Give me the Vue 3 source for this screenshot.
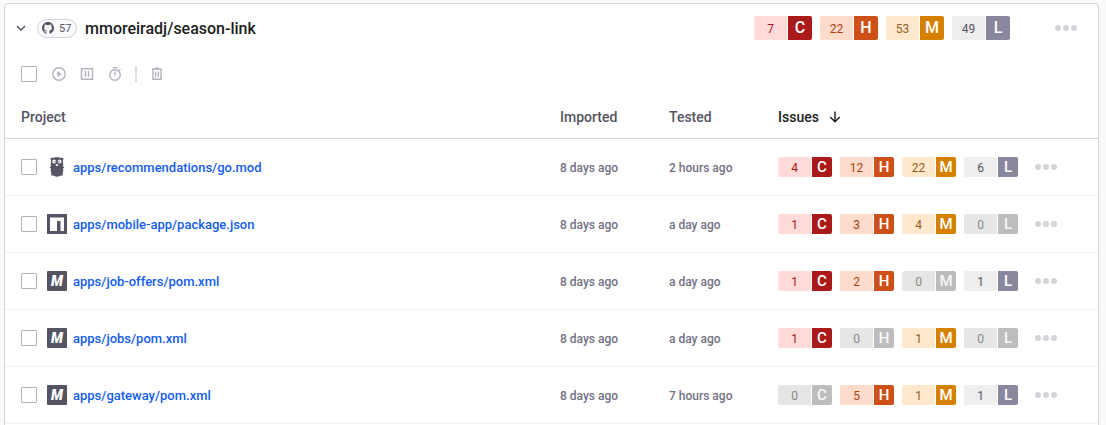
<script setup>
const levels = ['C', 'H', 'M', 'L']
const names = { C: 'critical', H: 'high', M: 'medium', L: 'low' }
const totals = [7, 22, 53, 49]
const projects = [
  { name: 'apps/recommendations/go.mod', icon: 'go', imported: '8 days ago', tested: '2 hours ago', issues: [4, 12, 22, 6] },
  { name: 'apps/mobile-app/package.json', icon: 'npm', imported: '8 days ago', tested: 'a day ago', issues: [1, 3, 4, 0] },
  { name: 'apps/job-offers/pom.xml', icon: 'maven', imported: '8 days ago', tested: 'a day ago', issues: [1, 2, 0, 1] },
  { name: 'apps/jobs/pom.xml', icon: 'maven', imported: '8 days ago', tested: 'a day ago', issues: [1, 0, 1, 0] },
  { name: 'apps/gateway/pom.xml', icon: 'maven', imported: '8 days ago', tested: '7 hours ago', issues: [0, 5, 1, 1] },
]
</script>

<template>
  <main class="page">
    <section class="card">
      <header class="head">
        <button class="icon-btn chevron" type="button" aria-label="Collapse">
          <svg width="10" height="6" viewBox="0 0 10 6"><path d="M1 1l4 4 4-4" fill="none" stroke="#555463" stroke-width="1.5" /></svg>
        </button>
        <span class="pill">
          <svg width="12" height="12" viewBox="0 0 16 16"><path fill="#555463" d="M8 0C3.58 0 0 3.58 0 8c0 3.54 2.29 6.53 5.47 7.59.4.07.55-.17.55-.38 0-.19-.01-.82-.01-1.49-2.01.37-2.53-.49-2.69-.94-.09-.23-.48-.94-.82-1.13-.28-.15-.68-.52-.01-.53.63-.01 1.08.58 1.23.82.72 1.21 1.87.87 2.33.66.07-.52.28-.87.51-1.07-1.78-.2-3.64-.89-3.64-3.95 0-.87.31-1.59.82-2.15-.08-.2-.36-1.02.08-2.12 0 0 .67-.21 2.2.82a7.6 7.6 0 0 1 4 0c1.53-1.04 2.2-.82 2.2-.82.44 1.1.16 1.92.08 2.12.51.56.82 1.27.82 2.15 0 3.07-1.87 3.75-3.65 3.95.29.25.54.73.54 1.48 0 1.07-.01 1.93-.01 2.2 0 .21.15.46.55.38A8.01 8.01 0 0 0 16 8c0-4.42-3.58-8-8-8z" /></svg>
          57
        </span>
        <h2 class="title">mmoreiradj/season-link</h2>
        <div class="issues large">
          <span v-for="(level, i) in levels" :key="level" class="chip" :class="names[level]">
            <span class="count">{{ totals[i] }}</span><span class="level">{{ level }}</span>
          </span>
        </div>
        <button class="icon-btn more" type="button" aria-label="More actions">
          <svg width="22" height="6" viewBox="0 0 22 6" fill="#d3d3d9"><circle cx="3" cy="3" r="3" /><circle cx="11" cy="3" r="3" /><circle cx="19" cy="3" r="3" /></svg>
        </button>
      </header>

      <div class="tools">
        <input type="checkbox" class="check" aria-label="Select all projects">
        <button class="icon-btn tool" type="button" aria-label="Activate">
          <svg width="14" height="14" viewBox="0 0 14 14"><circle cx="7" cy="7" r="6.2" fill="none" stroke="#b3b2bd" stroke-width="1.4" /><path d="M5.4 4v6l4.2-3z" fill="#b3b2bd" /></svg>
        </button>
        <button class="icon-btn tool" type="button" aria-label="Deactivate">
          <svg width="14" height="14" viewBox="0 0 14 14" fill="none" stroke="#b3b2bd" stroke-width="1.4"><path d="M1.500 1.700h11v10.600h-11zM5.500 4v6M8.500 4v6" /></svg>
        </button>
        <button class="icon-btn tool" type="button" aria-label="Test frequency">
          <svg width="14" height="14" viewBox="0 0 14 14" fill="none" stroke="#b3b2bd" stroke-width="1.4"><circle cx="7" cy="8" r="5.3" /><path d="M5 .7h4M7 4.500v4M11 3.600l1.400-1.400" /></svg>
        </button>
        <span class="divider"></span>
        <button class="icon-btn tool" type="button" aria-label="Delete">
          <svg width="14" height="14" viewBox="0 0 14 14" fill="none" stroke="#b3b2bd" stroke-width="1.4"><path d="M2 2.200h10M5 1.200h4M2.900 2.500v9.800h8.200V2.500M5.600 4.500v6M8.400 4.500v6" /></svg>
        </button>
      </div>

      <table class="table">
        <colgroup><col><col class="col-date"><col class="col-date"><col class="col-issues"></colgroup>
        <thead>
          <tr>
            <th>Project</th>
            <th>Imported</th>
            <th>Tested</th>
            <th aria-sort="descending">
              <button class="sort" type="button">
                Issues
                <svg width="12" height="12" viewBox="0 0 12 12"><path d="M6 .5v10M1.200 6L6 10.800 10.800 6" fill="none" stroke="#1c1c21" stroke-width="1.4" /></svg>
              </button>
            </th>
          </tr>
        </thead>
        <tbody>
          <tr v-for="project in projects" :key="project.name">
            <td>
              <div class="project">
                <input type="checkbox" class="check" :aria-label="project.name">
                <svg v-if="project.icon === 'go'" class="logo" width="20" height="20" viewBox="0 0 20 20">
                  <path fill="#555463" d="M5.500 1C7.500-.1 12.500-.1 14.500 1c1-.5 2 .1 1.900 1.100 0 .7-.5.9-.5 1.500.3 2 .3 4 .3 6.200.6.1 1 .5.8.900-.1.300-.5.300-.8.200 0 2.200.2 4.300-.6 6.100.3.700.3 1.500-.2 1.700-.4.200-.9-.1-1.200-.4-2.400 1.800-6 1.800-8.400 0-.3.300-.8.600-1.200.400-.5-.2-.5-1-.2-1.700-.8-1.800-.6-3.900-.6-6.100-.3.100-.7.100-.8-.200-.2-.4.200-.8.800-.900 0-2.200 0-4.200.3-6.200 0-.6-.5-.8-.5-1.500C3.500 1.100 4.500.5 5.500 1z" />
                  <g fill="#fff"><circle cx="7.200" cy="4.500" r="1.900" /><circle cx="12.600" cy="4.500" r="1.900" /><path d="M8.500 7.200h2.800l-.6 1.800H9.100z" /></g>
                  <g fill="#555463"><circle cx="7.900" cy="4.700" r=".8" /><circle cx="12" cy="4.700" r=".8" /></g>
                </svg>
                <svg v-else-if="project.icon === 'npm'" class="logo" width="20" height="20" viewBox="0 0 20 20">
                  <path fill="#555463" d="M0 0h20v20H0z" /><path fill="#fff" d="M3 3.500h14V17h-3.500V7H10v10H3z" />
                </svg>
                <svg v-else class="logo" width="20" height="20" viewBox="0 0 20 20">
                  <rect width="20" height="20" rx="1" fill="#555463" />
                  <text class="mark" x="10" y="15" text-anchor="middle" fill="#fff">M</text>
                </svg>
                <a class="link" href="#">{{ project.name }}</a>
              </div>
            </td>
            <td class="date">{{ project.imported }}</td>
            <td class="date">{{ project.tested }}</td>
            <td>
              <div class="row-end">
                <div class="issues">
                  <span v-for="(level, i) in levels" :key="level" class="chip" :class="project.issues[i] ? names[level] : 'none'">
                    <span class="count">{{ project.issues[i] }}</span><span class="level">{{ level }}</span>
                  </span>
                </div>
                <button class="icon-btn" type="button" aria-label="More actions">
                  <svg width="22" height="6" viewBox="0 0 22 6" fill="#d3d3d9"><circle cx="3" cy="3" r="3" /><circle cx="11" cy="3" r="3" /><circle cx="19" cy="3" r="3" /></svg>
                </button>
              </div>
            </td>
          </tr>
        </tbody>
      </table>
    </section>
  </main>
</template>

<style>
html { background: #f9f8fb; overflow: hidden; }
</style>

<style scoped>
* { box-sizing: border-box; }
.page {
  padding: 3px 7px 0 4px;
  font-family: Roboto, "Liberation Sans", sans-serif;
  color: #555463;
}
.card {
  background: #fff;
  border: 1px solid #d3d3d9;
  border-radius: 4px;
  padding-bottom: 16px;
}
svg { display: block; flex: none; }
button {
  border: 0;
  padding: 0;
  background: none;
  font: inherit;
  color: inherit;
  cursor: pointer;
}
.icon-btn { display: flex; align-items: center; justify-content: center; }
.head {
  display: flex;
  align-items: center;
  height: 48px;
  padding: 0 21px 0 11px;
}
.chevron { width: 10px; }
.pill {
  display: flex;
  align-items: center;
  gap: 5px;
  width: 40px;
  height: 19px;
  margin: 0 8px 0 11px;
  padding-left: 4px;
  border: 1px solid #d3d3d9;
  border-radius: 10px;
  background: #f9f8fb;
  font-size: 11px;
}
.title {
  margin: 0;
  font-size: 16px;
  font-weight: 500;
  color: #1c1c21;
}
.head .issues { margin-left: auto; }
.more { margin-left: 45px; }
.tools {
  display: flex;
  align-items: center;
  gap: 14px;
  height: 44px;
  padding: 0 16px;
}
.tools .check { margin-right: 1px; }
.check {
  appearance: none;
  flex: none;
  width: 16px;
  height: 16px;
  margin: 0;
  border: 1px solid #b3b2bd;
  border-radius: 1px;
  background: #fff;
}
.divider { width: 2px; height: 16px; margin: 0 -1px; background: #e1e1e5; }
.table {
  width: 100%;
  table-layout: fixed;
  border-collapse: separate;
  border-spacing: 0;
}
.col-date { width: 109px; }
.col-issues { width: 320px; }
th {
  height: 43px;
  padding: 0;
  border-bottom: 1px solid #d3d3d9;
  text-align: left;
  font-size: 14px;
  font-weight: 500;
}
th:first-child, td:first-child { padding-left: 16px; }
td { height: 57px; padding: 0; border-bottom: 1px solid #f0f0f2; }
.sort {
  display: flex;
  align-items: center;
  gap: 10px;
  color: #1c1c21;
}
.project { display: flex; align-items: center; }
.logo { margin: 0 6px 0 10px; }
.mark { font-size: 14px; font-weight: 900; font-style: italic; }
.link {
  font-size: 13px;
  font-weight: 500;
  color: #145deb;
  text-decoration: none;
}
.date { padding-top: 2px; font-size: 12px; font-weight: 500; color: #727184; }
.row-end { display: flex; align-items: center; gap: 17px; }
.issues { display: flex; gap: 8px; }
.chip {
  display: flex;
  gap: 1px;
  height: 20px;
  border-radius: 2px;
  overflow: hidden;
  line-height: 20px;
  text-align: center;
}
.count { width: 33px; padding-top: 1px; font-size: 12px; }
.level { width: 20px; font-size: 15px; font-weight: 500; color: #fff; }
.large .chip { height: 24px; line-height: 24px; }
.large .level { width: 24px; font-size: 16px; }
.critical .count { background: #ffdad8; color: #ab1a1a; }
.critical .level { background: #ab1a1a; }
.high .count { background: #ffdbcc; color: #a8420f; }
.high .level { background: #ce5019; }
.medium .count { background: #ffe8cc; color: #925c1e; }
.medium .level { background: #d68000; }
.low .count { background: #eeeeee; color: #555463; }
.low .level { background: #88879e; }
.none .count { background: #e6e6e6; color: #888888; }
.none .level { background: #bdbdbd; color: #f8f8f8; }
</style>
